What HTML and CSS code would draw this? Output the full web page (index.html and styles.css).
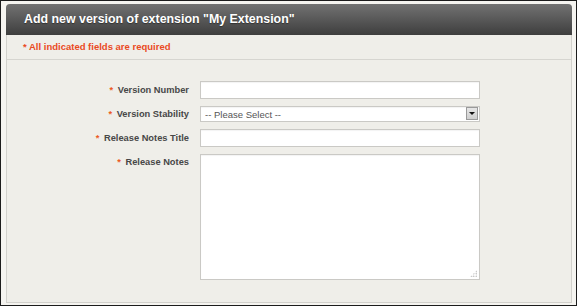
FILE: index.html
```html
<!DOCTYPE html>
<html lang="en">
<head>
    <meta charset="UTF-8">
    <meta name="viewport" content="width=device-width, initial-scale=1.0">
    <title>Add new version</title>
    <link rel="stylesheet" href="styles.css">
</head>
<body>
    <div class="frame">
        <div class="panel">
            <div class="panel-header">Add new version of extension "My Extension"</div>
            <div class="notice">* All indicated fields are required</div>
            <form class="version-form">
                <label class="field-label" for="version"><span class="req">*</span> Version Number</label>
                <input class="field" type="text" id="version">

                <label class="field-label" for="stability"><span class="req">*</span> Version Stability</label>
                <div class="select-wrap">
                    <select class="field select" id="stability">
                        <option>-- Please Select --</option>
                        <option>Stable</option>
                        <option>Beta</option>
                        <option>Alpha</option>
                    </select>
                    <span class="select-btn"></span>
                </div>

                <label class="field-label" for="notes-title"><span class="req">*</span> Release Notes Title</label>
                <input class="field" type="text" id="notes-title">

                <label class="field-label top" for="notes"><span class="req">*</span> Release Notes</label>
                <div class="textarea-wrap">
                    <textarea class="field notes" id="notes"></textarea>
                    <span class="grip"></span>
                </div>
            </form>
        </div>
    </div>
</body>
</html>
```

FILE: styles.css
```css
html, body {
    margin: 0;
    padding: 0;
}
body {
    font-family: "Liberation Sans", Arial, sans-serif;
    background-color: #f5f4f0;
}
.frame {
    width: 577px;
    height: 306px;
    box-sizing: border-box;
    border: 1px solid #1c1c1c;
    padding: 3px 4px 2px 5px;
    background-color: #f5f4f0;
}
.panel {
    height: 299px;
    box-sizing: border-box;
    border: 1px solid #d2d1cc;
    border-top: none;
    border-radius: 4px 4px 0 0;
    background-color: #efeee9;
}
.panel-header {
    height: 31px;
    line-height: 31px;
    padding-left: 18px;
    margin: 0 -1px;
    border-radius: 4px 4px 0 0;
    background: linear-gradient(#727272, #3e3e3e);
    color: #fff;
    font-size: 12.4px;
    font-weight: bold;
    text-shadow: 0 1px 1px rgba(0,0,0,0.4);
}
.notice {
    height: 24px;
    line-height: 24px;
    padding-left: 16px;
    border-bottom: 1px solid #d6d5d0;
    color: #ea4a1f;
    font-size: 9.5px;
    font-weight: bold;
}
.version-form {
    display: grid;
    grid-template-columns: 182px 280px;
    column-gap: 11px;
    row-gap: 7px;
    padding-top: 21px;
    align-items: center;
}
.field-label {
    text-align: right;
    color: #474747;
    font-size: 9.3px;
    font-weight: bold;
}
.field-label.top {
    align-self: start;
    padding-top: 3px;
}
.req {
    color: #ec5a24;
    margin-right: 2px;
}
.field {
    display: block;
    width: 280px;
    height: 18px;
    box-sizing: border-box;
    margin: 0;
    border: 1px solid #cac9c5;
    border-radius: 0;
    background-color: #fff;
    box-shadow: inset 0 1px 1px rgba(0,0,0,0.05);
    font-family: "Liberation Sans", Arial, sans-serif;
    font-size: 9.5px;
    color: #555;
    outline: none;
}
.select-wrap, .textarea-wrap {
    position: relative;
}
.select {
    height: 16px;
    padding: 0 0 0 4px;
    appearance: none;
    -webkit-appearance: none;
}
.select-btn {
    position: absolute;
    right: 2px;
    top: 1px;
    width: 12px;
    height: 13px;
    box-sizing: border-box;
    border: 1px solid #9a9a9a;
    background: linear-gradient(#e6e6e6, #cfcfcf);
    pointer-events: none;
}
.select-btn::after {
    content: "";
    position: absolute;
    left: 2px;
    top: 4px;
    border-left: 3px solid transparent;
    border-right: 3px solid transparent;
    border-top: 3px solid #111;
}
.notes {
    height: 126px;
    resize: none;
}
.grip {
    position: absolute;
    right: 3px;
    bottom: 3px;
    width: 7px;
    height: 7px;
    background-image: radial-gradient(circle, #a9a9a9 0.7px, transparent 0.9px);
    background-size: 2.5px 2.5px;
    clip-path: polygon(100% 0, 100% 100%, 0 100%);
}
```
